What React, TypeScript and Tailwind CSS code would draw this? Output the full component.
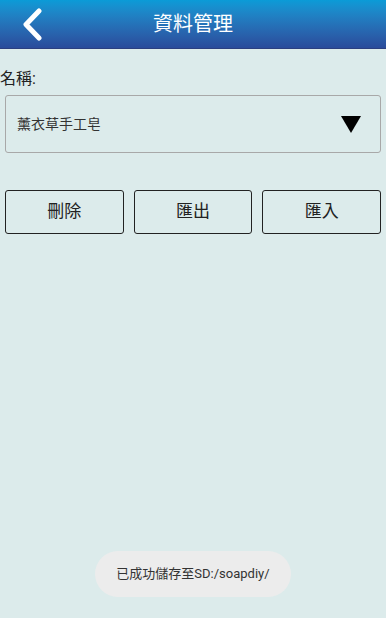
export default function App() {
  return (
    <div
      className="relative h-[618px] w-[386px] overflow-hidden bg-[#dcebeb]"
      style={{ fontFamily: '"Roboto", "Noto Sans CJK TC", sans-serif' }}
    >
      <div className="relative flex h-[49px] items-center justify-center border-b border-[#2c3f80] bg-gradient-to-b from-[#0a9bd7] to-[#2a4b9b]">
        <svg
          className="absolute left-[21px] top-[8px]"
          width="22"
          height="33"
          viewBox="0 0 22 33"
        >
          <path
            d="M18 3 L5 16.5 L18 30"
            fill="none"
            stroke="white"
            strokeWidth="5"
            strokeLinecap="round"
            strokeLinejoin="round"
          />
        </svg>
        <span className="text-[20px] text-white">資料管理</span>
      </div>

      <div className="pt-[20px] text-[16px] leading-[20px] text-[#222]">名稱:</div>

      <div className="mx-[5px] mt-[6px] flex h-[58px] items-center justify-between rounded-[3px] border border-[#a8a8a8] pl-[11px] pr-[19px]">
        <span className="text-[14px] text-[#333]">薰衣草手工皂</span>
        <svg width="20" height="17" viewBox="0 0 20 17">
          <path d="M0 0 H20 L10 17 Z" fill="#000" />
        </svg>
      </div>

      <div className="mx-[5px] mt-[37px] grid grid-cols-3 gap-[10px]">
        {["刪除", "匯出", "匯入"].map((t) => (
          <button
            key={t}
            className="flex h-[44px] items-center justify-center rounded-[3px] border border-[#222] text-[17px] text-[#222]"
          >
            {t}
          </button>
        ))}
      </div>

      <div className="absolute left-[95px] top-[551px] flex h-[46px] w-[196px] items-center justify-center rounded-full bg-[#ececec] text-[13px] text-[#333]">
        已成功儲存至SD:/soapdiy/
      </div>
    </div>
  );
}
